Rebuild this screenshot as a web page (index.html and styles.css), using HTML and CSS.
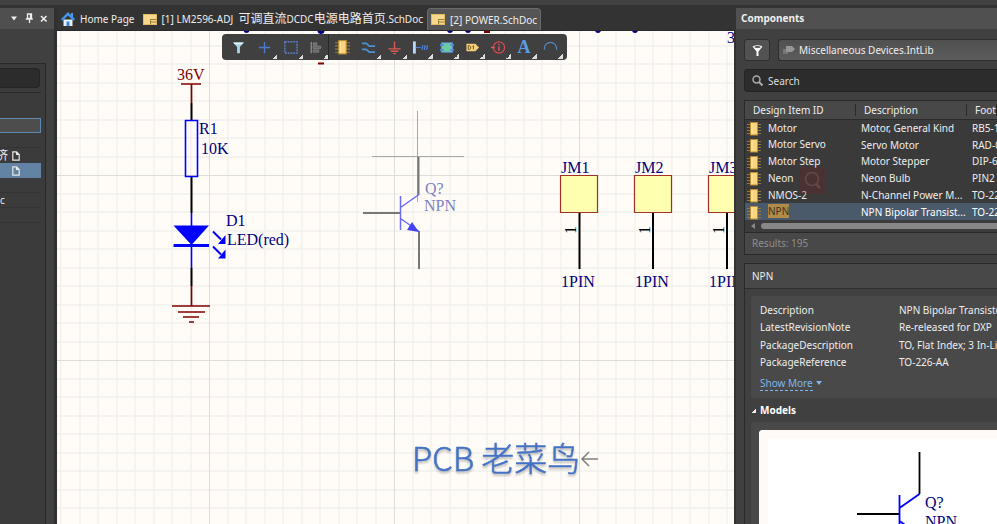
FILE: index.html
```html
<!DOCTYPE html>
<html lang="en">
<head>
<meta charset="utf-8">
<title>POWER.SchDoc</title>
<link rel="stylesheet" href="styles.css">
</head>
<body>
<svg class="defs" width="0" height="0" aria-hidden="true">
  <symbol id="chip" viewBox="0 0 14 14">
    <path d="M0 2.500h14M0 5.500h14M0 8.500h14M0 11.500h14" stroke="#8f7a3c"/>
    <rect x="3.500" y=".5" width="7" height="12.500" fill="#fbd47b" stroke="#b98c35"/>
    <path d="M5 2v10" stroke="#ffe7ac"/>
  </symbol>
  <symbol id="sheet" viewBox="0 0 14 11">
    <rect x=".5" y=".5" width="13" height="10" fill="#f6d98c" stroke="#e3bd62"/>
    <path d="M7.500 10.500v-5h6M7.500 8h6" fill="none" stroke="#9a7c32"/>
  </symbol>
  <symbol id="page" viewBox="0 0 8 10">
    <path d="M.8.8h3.700l2.700 2.700v5.700H.8zM4.500.8v2.700h2.700" fill="none" stroke="#e8e8e8" stroke-width="1.200"/>
  </symbol>
</svg>

<div class="app">
  <div class="topbar"></div>

  <aside class="left">
    <header class="left-head">
      <svg width="38" height="11" viewBox="0 0 38 11">
        <path d="M1 3.500h6L4 7.500z" fill="#eee"/>
        <path d="M17.500 1h4v4.500h-4zM20.500 1v5M15.800 6h7M19.500 6v4" fill="none" stroke="#eee" stroke-width="1.300"/>
        <path d="M31 3l5.500 5.500M36.500 3L31 8.500" stroke="#eee" stroke-width="1.600"/>
      </svg>
    </header>
    <div class="left-body">
      <input class="left-search" type="text" aria-label="Find project">
      <div class="tree">
        <div class="tree-row focus"></div>
        <div class="tree-row line"></div>
        <div class="tree-row"><span class="cjk">济</span><svg width="8" height="10"><use href="#page"/></svg></div>
        <div class="tree-row selected"><svg width="8" height="10"><use href="#page"/></svg></div>
        <div class="tree-row line"></div>
        <div class="tree-row line text">c</div>
        <div class="tree-row line"></div>
        <div class="tree-row"></div>
      </div>
    </div>
  </aside>

  <main class="editor">
    <nav class="tabs">
      <a class="tab home" href="#home">
        <svg width="14" height="15" viewBox="0 0 14 15"><path d="M2.500 7.500h9V14h-9z" fill="#e4f0fb"/><path d="M10 1h2v4h-2z" fill="#4d9de8"/><path d="M.8 8L7 1.800 13.200 8" fill="none" stroke="#3f96ec" stroke-width="2.400"/><path d="M5.500 9.500h3V14h-3z" fill="#3a86d8"/></svg>
        Home Page</a>
      <a class="tab doc" href="#doc1"><svg width="14" height="11"><use href="#sheet"/></svg><span>[1] LM2596-ADJ&nbsp; <span class="cjk">可调直流</span>DCDC<span class="cjk">电源电路首页</span>.SchDoc</span></a>
      <a class="tab active" href="#doc2"><svg width="14" height="11"><use href="#sheet"/></svg>[2] POWER.SchDoc</a>
    </nav>
    <div class="canvas">
      <svg class="schematic" width="100%" height="100%">
        <defs>
          <pattern id="grid" x="152" y="144" width="185" height="185" patternUnits="userSpaceOnUse">
            <path d="M19 0v185M37 0v185M56 0v185M74 0v185M93 0v185M111 0v185M130 0v185M148 0v185M167 0v185M0 19h185M0 37h185M0 56h185M0 74h185M0 93h185M0 111h185M0 130h185M0 148h185M0 167h185" stroke="#f1f1ed" stroke-width="1.400"/>
            <path d="M.5 0v185M0 .5h185" stroke="#deded9"/>
          </pattern>
        </defs>
        <rect width="100%" height="100%" fill="#fffcf7"/>
        <rect width="100%" height="100%" fill="url(#grid)"/>
        <g transform="translate(-57 -31)">
          <g fill="#00008b"><circle cx="246.500" cy="30" r="3"/><circle cx="321" cy="30.500" r="3.500"/><circle cx="450" cy="30" r="3"/><circle cx="468" cy="30" r="3"/><circle cx="598" cy="30" r="3"/><circle cx="635" cy="30" r="3"/></g>
          <path d="M484 32h6M318 63.500h6" stroke="#800000" stroke-width="2"/>
          <g class="sch-text">
            <text x="727" y="43" fill="#00008b">3</text>
            <text x="177" y="80" fill="#800000">36V</text>
            <g fill="#00007f">
              <text x="199" y="134">R1</text><text x="201" y="154">10K</text>
              <text x="226" y="226">D1</text><text x="227" y="245">LED(red)</text>
              <text x="561" y="173">JM1</text><text x="635" y="173">JM2</text><text x="709" y="173">JM3</text>
              <text x="561" y="287">1PIN</text><text x="635" y="287">1PIN</text><text x="709" y="287">1PIN</text>
            </g>
            <g fill="#8080bf"><text x="425" y="194">Q?</text><text x="424" y="211">NPN</text></g>
            <g fill="#000">
              <text transform="translate(576 234) rotate(-90)">1</text>
              <text transform="translate(650 234) rotate(-90)">1</text>
              <text transform="translate(724 234) rotate(-90)">1</text>
            </g>
          </g>
          <g fill="none" stroke-width="2">
            <path d="M181 84h20M191.500 84v19M191.500 286v20M172 306h38M178 312h27M183 317h16M189 322h5" stroke="#800000" stroke-width="1.700"/>
            <path d="M191.500 103v17M191.500 177v36M191.500 268v18" stroke="#000"/>
            <path d="M185.500 120.500h12v56h-12zM191.500 213v14M191.500 246v22" stroke="#00f" stroke-width="1.600"/>
            <path d="M173.500 245.500h35.500" stroke="#00f" stroke-width="3"/>
            <path d="M213 231.500l8 8M213 246.500l8 8" stroke="#00f"/>
          </g>
          <path d="M173.500 225.500H209L191.500 245zM225.500 235v9h-7.500zM225.500 249.500v9H218z" fill="#00f"/>
          <g fill="#ffffb0" stroke="#a03028" stroke-width="1.200">
            <path d="M560.500 175.500h37v37h-37zM634.500 175.500h37v37h-37zM708.500 175.500h37v37h-37z"/>
          </g>
          <path d="M579.500 213v56M653 213v56M727 213v56" stroke="#000" stroke-width="2"/>
          <path d="M372 156.500h92M417.500 111v91" stroke="#a7a7a5"/>
          <path d="M418.500 157v38M363 213h37M419 231v38" stroke="#777774" stroke-width="2"/>
          <path d="M400.500 196v34M400.500 207.500l18.500-13M400.500 218.500l18.500 13" stroke="#6b6bfa" stroke-width="1.500"/>
          <path d="M419 232l-12-2 5-8z" fill="#4343f7"/>
          <g class="mark">
            <text x="412" y="471">PCB 老菜鸟</text>
          </g>
          <path d="M598 459h-16M589 452l-7 7 7 7" fill="none" stroke="#7f7f7d" stroke-width="1.500"/>
        </g>
      </svg>

      <div class="toolbar" role="toolbar" aria-label="Active bar">
        <button class="plain" aria-label="Filter"><svg viewBox="0 0 16 16"><path d="M2 2.500h12l-4.500 5V14h-3V7.500z" fill="#a9d5e4"/><path d="M3 3h10l-1 1.500H4z" fill="#e3f5fa"/></svg></button>
        <button aria-label="Move"><svg viewBox="0 0 16 16"><path d="M8 2v12M2 8h12" stroke="#4b79d0" stroke-width="1.500"/></svg></button>
        <button aria-label="Select area"><svg viewBox="0 0 16 16"><path d="M2 2h13v12H2z" fill="none" stroke="#5c8bea" stroke-width="1.300" stroke-dasharray="2 1"/></svg></button>
        <button class="sep" aria-label="Align"><svg viewBox="0 0 16 16"><path d="M3.500 2v12" stroke="#888" stroke-width="1.500"/><path d="M5.500 3h4v2.500h-4zM5.500 6.500h8V9h-8zM5.500 10.500h6V13h-6z" fill="#666" stroke="#8c8c8c" stroke-width=".7"/></svg></button>
        <button class="plain" aria-label="Place part"><svg viewBox="0 0 14 14"><use href="#chip"/></svg></button>
        <button aria-label="Wire"><svg viewBox="0 0 16 16"><path d="M1 3.500h4.500l3.500 3h6M1 10h4.500l3.500 3h6" fill="none" stroke="#4d91d3" stroke-width="1.800"/></svg></button>
        <button aria-label="Power port"><svg viewBox="0 0 16 16"><path d="M8 1.500V9M1.500 9.500h13M4 12h8M6.500 14.500h3" stroke="#df5a50" stroke-width="1.400"/></svg></button>
        <button aria-label="Signal harness"><svg viewBox="0 0 16 16"><path d="M1.500 1.500v13" stroke="#b8d8ff" stroke-width="3"/><path d="M3 8h5M9.500 10.500l1-5M12 10.500l1-5M14.500 10.500l1-5" stroke="#4d83df" stroke-width="1.300"/></svg></button>
        <button aria-label="Sheet symbol"><svg viewBox="0 0 16 16"><path d="M2.500 3h12v10h-12z" fill="#70c9a3" stroke="#5c91e4"/><path d="M1 4.500h4v2H1zM1 9.500h4v2H1zM12 4.500h4v2h-4zM12 9.500h4v2h-4z" fill="#4c88df"/></svg></button>
        <button aria-label="Port"><svg viewBox="0 0 16 16"><path d="M1.500 4H11l4 4-4 4H1.500z" fill="#f5cf79"/><path d="M3.500 6v4h1.500l1-1V7L5 6zM8 7l1-1v4" fill="none" stroke="#6a5526"/></svg></button>
        <button aria-label="Directive"><svg viewBox="0 0 16 16"><circle cx="8.500" cy="8" r="6" fill="none" stroke="#d64950" stroke-width="1.300"/><path d="M0 8h4M8.500 7v4.500M8.500 4v1.500" stroke="#ed5358" stroke-width="1.500"/></svg></button>
        <button class="letter" aria-label="Text">A</button>
        <button aria-label="Arc"><svg viewBox="0 0 16 16"><path d="M1.500 10.500V9a6.500 6.500 0 0 1 13 0v1.500" fill="none" stroke="#4f87bd" stroke-width="1.300"/></svg></button>
      </div>
    </div>
  </main>

  <aside class="panel">
    <h2 class="panel-head">Components</h2>
    <div class="panel-body">
      <div class="source">
        <button class="filter" aria-label="Filter components"><svg width="13" height="13" viewBox="0 0 13 13"><path d="M1.500 2.500Q6.500 0 11.500 2.500L7.500 7.500V12h-2V7.500z" fill="#fff"/><ellipse cx="6.500" cy="3" rx="3.200" ry="1" fill="#555"/></svg></button>
        <div class="library">
          <svg width="12" height="10" viewBox="0 0 12 10"><path d="M0 4h5v5H0z" fill="#777"/><path d="M3 1h6l3 3-3 3H3z" fill="#969696"/></svg>
          <select aria-label="Library"><option>Miscellaneous Devices.IntLib</option></select>
        </div>
      </div>
      <label class="search">
        <svg width="11" height="11" viewBox="0 0 11 11"><circle cx="4.500" cy="4.500" r="3.500" fill="none" stroke="#aaa" stroke-width="1.500"/><path d="M7 7l3.500 3.500" stroke="#aaa" stroke-width="2"/></svg>
        <input type="search" placeholder="Search" aria-label="Search">
      </label>

      <section class="results">
        <table>
          <colgroup><col class="c-id"><col class="c-desc"><col></colgroup>
          <thead><tr><th>Design Item ID</th><th>Description</th><th>Foot</th></tr></thead>
          <tbody>
            <tr><td><svg><use href="#chip"/></svg>Motor</td><td>Motor, General Kind</td><td>RB5-1</td></tr>
            <tr><td><svg><use href="#chip"/></svg>Motor Servo</td><td>Servo Motor</td><td>RAD-0</td></tr>
            <tr><td><svg><use href="#chip"/></svg>Motor Step</td><td>Motor Stepper</td><td>DIP-6</td></tr>
            <tr><td><svg><use href="#chip"/></svg>Neon</td><td>Neon Bulb</td><td>PIN2</td></tr>
            <tr><td><svg><use href="#chip"/></svg>NMOS-2</td><td>N-Channel Power M...</td><td>TO-22</td></tr>
            <tr class="current"><td><svg><use href="#chip"/></svg><mark>NPN</mark></td><td>NPN Bipolar Transist...</td><td>TO-22</td></tr>
          </tbody>
        </table>
        <svg class="ghost" viewBox="0 0 27 27"><rect width="27" height="27" rx="3" fill="#702020" fill-opacity=".3"/><circle cx="13" cy="12" r="6.500" fill="none" stroke="#624848" stroke-width="1.600"/><path d="M17 17l4 4" stroke="#624848" stroke-width="2.500"/></svg>
        <div class="scroll"><i class="arrow"></i><i class="thumb"></i></div>
        <p class="count">Results: 195</p>
      </section>

      <section class="details">
        <h3>NPN</h3>
        <div class="details-body">
          <div class="card">
            <dl>
              <dt>Description</dt><dd>NPN Bipolar Transisto</dd>
              <dt>LatestRevisionNote</dt><dd>Re-released for DXP</dd>
              <dt>PackageDescription</dt><dd>TO, Flat Index; 3 In-Li</dd>
              <dt>PackageReference</dt><dd>TO-226-AA</dd>
            </dl>
            <a class="more" href="#more"><span>Show More</span><i></i></a>
          </div>
          <h4><i></i>Models</h4>
          <div class="card models">
            <div class="preview">
              <svg width="100%" height="120">
                <g fill="none">
                  <path d="M151.500 13v42M89 75h42" stroke="#000" stroke-width="1.800"/>
                  <path d="M131.500 56v38M131.500 69l20-14M131.500 82l20 14" stroke="#00f" stroke-width="1.800"/>
                </g>
                <path d="M152 96l-13-2 6-9z" fill="#00f"/>
                <g class="sch-text" fill="#00007f"><text x="157" y="69">Q?</text><text x="157" y="88">NPN</text></g>
              </svg>
            </div>
          </div>
        </div>
      </section>
    </div>
  </aside>
</div>
</body>
</html>
```
FILE: styles.css
```css
* { box-sizing: border-box; }

body {
  margin: 0;
  background: #404040;
  color: #eee;
  font: 10px/16px "Noto Sans", "Noto Sans CJK SC", sans-serif;
}

h2, h3, h4, p, dl, dd { margin: 0; }
a { color: inherit; text-decoration: none; }
input, select, button { font: inherit; color: inherit; margin: 0; }
svg { flex: none; }
.defs { position: absolute; }

.app {
  display: grid;
  grid-template: 8px minmax(0, 1fr) / 57px minmax(0, 1fr) 263px;
  height: 100vh;
  overflow: hidden;
}

.topbar {
  grid-column: 1 / -1;
  background: #424242;
  border-bottom: 3px solid #333;
}

/* Projects panel */
.left {
  display: flex;
  flex-direction: column;
  border-right: 3px solid #303030;
  background: #404040;
}
.left-head {
  display: flex;
  align-items: center;
  justify-content: flex-end;
  height: 21px;
  padding-right: 6px;
  background: #4f4f4f;
}
.left-body {
  flex: 1;
  margin: 34px 8px 0 0;
  padding-top: 4px;
  background: #3b3b3b;
  border: solid #292929;
  border-width: 1px 1px 0 0;
}
.left-search {
  display: block;
  width: 40px;
  height: 20px;
  background: #2c2c2c;
  border: 1px solid #252525;
  border-left: 0;
  border-radius: 0 4px 4px 0;
}
.tree {
  width: 41px;
  margin-top: 4px;
  padding-top: 25px;
  border-top: 1px solid #292929;
}
.tree-row {
  display: flex;
  align-items: center;
  justify-content: flex-end;
  height: 15px;
  padding-right: 21px;
  white-space: nowrap;
}
.tree-row span { margin-right: 4px; }
.tree-row.line { border-bottom: 1px solid #343434; }
.tree-row.focus { background: #4d4d4d; border: 1px solid #6088ae; border-left: 0; }
.tree-row.selected { background: #6283a3; }
.tree-row.text { justify-content: flex-start; }

/* Editor */
.editor { display: flex; flex-direction: column; min-width: 0; }
.tabs {
  display: flex;
  height: 23px;
  background: #333;
  border-bottom: 1px solid #292929;
  white-space: nowrap;
}
.tab { display: flex; align-items: center; gap: 5px; padding: 0 4px; }
.cjk { font-size: 12px; }
.tab.active {
  padding: 0 3px;
  background: #555;
  border: 1px solid #6a6a6a;
  border-bottom: 0;
  border-radius: 4px 4px 0 0;
}
.canvas { position: relative; flex: 1; min-height: 0; overflow: hidden; }
.schematic { display: block; }
.sch-text { font: 16px "Liberation Serif", serif; }
.mark {
  font: 300 33px "Noto Sans CJK SC", sans-serif;
  fill: #4472c4;
  stroke: #4472c4;
  stroke-width: 0.5;
  filter: drop-shadow(0 2px 1px #0004);
}

.toolbar {
  position: absolute;
  top: 3px;
  left: 165px;
  display: flex;
  height: 26px;
  padding: 0 4px 0 3px;
  background: #404040;
  border-radius: 4px;
}
.toolbar button {
  position: relative;
  display: flex;
  align-items: center;
  justify-content: center;
  width: 26px;
  padding: 0;
  background: none;
  border: 0;
}
.toolbar svg { width: 15px; height: 15px; }
.toolbar button::after {
  content: "";
  position: absolute;
  right: 0;
  bottom: 1px;
  width: 5px;
  height: 5px;
  background: linear-gradient(135deg, transparent 50%, #ddd 50%);
}
.toolbar .plain::after { display: none; }
.toolbar .sep { border-right: 1px solid #292929; }
.toolbar .letter { font: bold 18px "Liberation Serif", serif; color: #5b9be0; }

/* Components panel */
.panel {
  display: flex;
  flex-direction: column;
  min-height: 0;
  overflow: hidden;
  border-left: 2px solid #333;
  white-space: nowrap;
}
.panel-head {
  flex: none;
  height: 21px;
  padding: 0 5px;
  background: #505050;
  font-size: 10px;
  line-height: 20px;
}
.panel-body { padding: 10px 0 0 8px; }
.source { display: flex; gap: 8px; height: 22px; }
.filter {
  display: grid;
  place-items: center;
  width: 26px;
  padding: 0;
  background: #525252;
  border: 1px solid #2e2e2e;
  border-radius: 3px;
}
.library {
  flex: 1;
  display: flex;
  align-items: center;
  gap: 4px;
  padding-left: 4px;
  background: linear-gradient(#505050, #5c5c5c);
  border: solid #2e2e2e;
  border-width: 1px 0 1px 1px;
  border-radius: 3px 0 0 3px;
}
.library select { flex: 1; appearance: none; background: none; border: 0; padding: 0; }
.search {
  display: flex;
  align-items: center;
  gap: 5px;
  height: 23px;
  margin-top: 8px;
  padding-left: 7px;
  background: #2c2c2c;
  border: solid #242424;
  border-width: 1px 0 1px 1px;
  border-radius: 4px 0 0 4px;
}
.search input { flex: 1; padding: 0; background: none; border: 0; outline: 0; }
.search input::placeholder { color: #ddd; opacity: 1; }

.results {
  position: relative;
  margin-top: 8px;
  border: solid #292929;
  border-width: 1px 0 1px 1px;
}
table { width: 100%; height: 119px; table-layout: fixed; border-collapse: collapse; }
.c-id, .c-desc { width: 111px; }
th {
  height: 18px;
  padding: 0 8px;
  overflow: hidden;
  background: linear-gradient(#2b2b2b, #2b2b2b) right center / 1px 12px no-repeat #484848;
  border-bottom: 1px solid #2b2b2b;
  font-weight: normal;
  text-align: left;
  line-height: 16px;
}
td {
  padding: 0 0 0 5px;
  overflow: hidden;
  line-height: 16px;
}
tbody { background: #3a3a3a; }
td svg { width: 14px; height: 14px; margin: 0 7px 0 -3px; vertical-align: middle; }
.current { background: #4a5a6b; color: #fff; }
mark { background: #b08c48; color: #3a3222; }
.ghost { position: absolute; top: 66px; left: 54px; width: 27px; height: 27px; }
.scroll { display: flex; align-items: center; gap: 6px; height: 13px; padding-left: 6px; background: #3c3c3c; border-bottom: 1px solid #292929; }
.arrow { border: solid transparent; border-width: 3px 4px 3px 0; border-right-color: #888; }
.thumb { flex: 1; height: 6px; background: #888; border-radius: 3px 0 0 3px; }
.count { height: 21px; padding-left: 7px; background: #484848; color: #8e8e8e; line-height: 21px; }

.details { margin-top: 8px; border: solid #292929; border-width: 1px 0 0 1px; }
h3 { height: 25px; padding-left: 7px; background: #484848; border-bottom: 1px solid #2e2e2e; font-size: 10px; font-weight: normal; line-height: 24px; }
.details-body { padding: 7px 0 0 6px; }
.card { padding: 5px 0 3px 9px; background: #494949; border-radius: 3px 0 0 3px; }
dl { display: grid; grid-template-columns: 139px 1fr; grid-auto-rows: 1fr; height: 70px; align-items: center; }
.more { display: flex; align-items: center; gap: 3px; height: 24px; color: #7fb5ea; }
.more span { border-bottom: 1px dashed; line-height: 14px; }
.more i { border: solid transparent; border-width: 4px 3px 0; border-top-color: #7fb5ea; }
h4 { display: flex; align-items: center; gap: 4px; height: 24px; font-size: 10px; color: #fff; }
h4 i { width: 5px; height: 5px; background: linear-gradient(135deg, transparent 50%, #eee 50%); }
.models { padding: 8px 0 0 8px; }
.preview { background: #fff; border: 9px solid #fffaf5; border-width: 9px 0 0 9px; border-radius: 4px 0 0 0; }
.preview svg { display: block; }
```
